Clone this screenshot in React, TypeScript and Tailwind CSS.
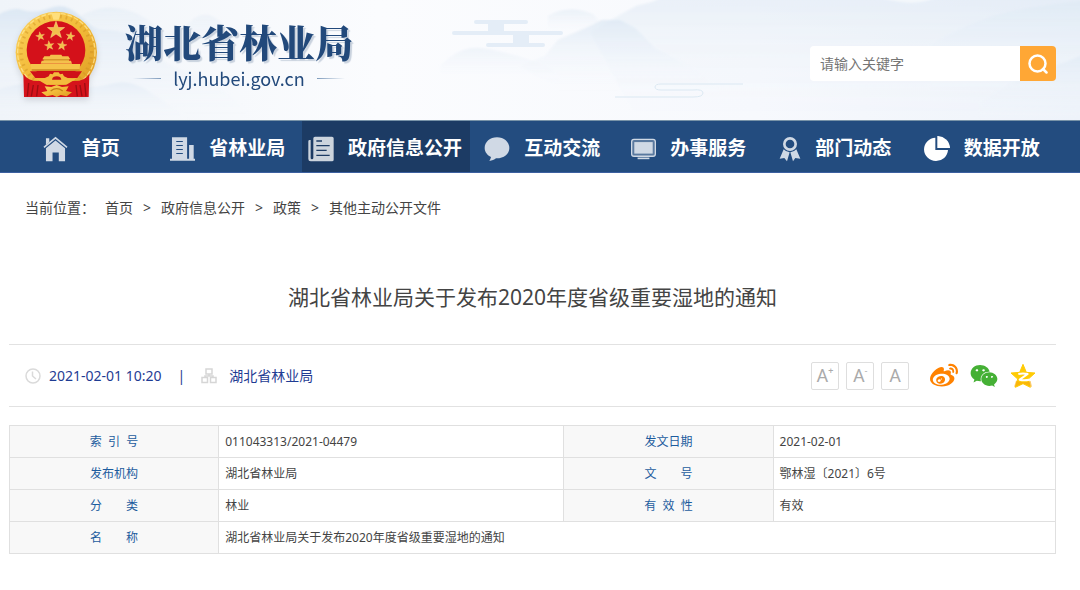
import { useState } from 'react';
import type { ReactNode } from 'react';
import { FaWeibo, FaWeixin } from 'react-icons/fa';

type NavItem = {
    label: string
    icon: ReactNode
    active?: boolean
}

const navItems: NavItem[] = [
    {
        label: '首页',
        icon: (
            <svg viewBox="0 0 76 78" className="h-[26px] w-[25px] shrink-0" fill="#d0d9e5">
                <path d="M9 6h10v12L9 27z" />
                <path d="M3 34 38 5l35 29" fill="none" stroke="#d0d9e5" strokeWidth="5" />
                <path d="M38 13 67 37v39H48V50H29v26H9V37z" />
            </svg>
        ),
    },
    {
        label: '省林业局',
        icon: (
            <svg viewBox="0 0 76 78" className="h-[26px] w-[25px] shrink-0" fill="#d0d9e5">
                <path fillRule="evenodd" d="M6 3h46v66h6V27h14v42h4v6H0v-6h6zM19 15v3h20v-3zm0 12v3h20v-3zm0 12v3h20v-3zm0 12v3h20v-3z" />
            </svg>
        ),
    },
    {
        label: '政府信息公开',
        active: true,
        icon: (
            <svg viewBox="0 0 78 78" className="h-[26px] w-[26px] shrink-0">
                <path d="M21 2h51q5 0 5 5v64q0 5-5 5H8q-7 0-7-7V16q0-4 4-4h3v54q0 4 4 4t4-4V7q0-5 5-5z" fill="#ccd4dd" />
                <path d="M25 15h17M25 29h40M25 43h31M25 58h40" stroke="#1c3b64" strokeWidth="4" />
            </svg>
        ),
    },
    {
        label: '互动交流',
        icon: (
            <svg viewBox="0 0 78 78" className="h-[26px] w-[26px] shrink-0" fill="#d0d9e5">
                <path d="M39 4C18 4 2 18 2 36c0 12 8 22 19 27-1 5-3 9-5 12 8-1 15-4 20-8 22 1 40-12 40-31C76 18 60 4 39 4z" />
            </svg>
        ),
    },
    {
        label: '办事服务',
        icon: (
            <svg viewBox="0 0 76 78" className="h-[26px] w-[25px] shrink-0" fill="#d0d9e5">
                <rect x="2" y="10" width="72" height="51" rx="7" fill="#5a799f" stroke="#d0d9e5" strokeWidth="4" />
                <rect x="10" y="18" width="56" height="35" />
                <path d="M20 65h36v5H20z" />
            </svg>
        ),
    },
    {
        label: '部门动态',
        icon: (
            <svg viewBox="0 0 64 78" className="h-[26px] w-[22px] shrink-0" fill="#d0d9e5">
                <circle cx="32" cy="24" r="17" fill="none" stroke="#d0d9e5" strokeWidth="8" />
                <path d="M13 40q7 8 18 9l-8 27-8-10-14 2z" />
                <path d="M51 40q-7 8-18 9l8 27 7-10 15 2z" />
            </svg>
        ),
    },
    {
        label: '数据开放',
        icon: (
            <svg viewBox="0 0 78 78" className="h-[26px] w-[26px] shrink-0" fill="#fff">
                <path d="M34 5v37h38A36 35 0 1 1 34 5z" />
                <path d="M40 0a37 37 0 0 1 38 36H40z" />
            </svg>
        ),
    },
]

const crumbs = ['首页', '政府信息公开', '政策', '其他主动公开文件']

const records = [
    ['索\u00a0\u00a0引\u00a0\u00a0号', '011043313/2021-04479', '发文日期', '2021-02-01'],
    ['发布机构', '湖北省林业局', '文\u3000\u3000号', '鄂林湿〔2021〕6号'],
    ['分\u3000\u3000类', '林业', '有\u00a0\u00a0效\u00a0\u00a0性', '有效'],
]

const STAR = 'M0-10 2.4-3.2 9.5-3.1 3.8 1.2 5.9 8.1 0 4-5.9 8.1-3.8 1.2-9.5-3.1-2.4-3.2z'

const Scenery = () => (
    <svg viewBox="0 0 1080 120" preserveAspectRatio="none" className="absolute inset-0 h-full w-full" aria-hidden="true">
        <defs>
            <linearGradient id="peak" x1="0" y1="0" x2="0" y2="1">
                <stop offset="0" stopColor="#dbe7f3" />
                <stop offset="1" stopColor="#f6f9fd" stopOpacity="0" />
            </linearGradient>
            <linearGradient id="sky" x1="0" y1="0" x2="1" y2="0">
                <stop offset="0" stopColor="#f0f4f9" />
                <stop offset="0.35" stopColor="#fbfcfe" />
                <stop offset="0.7" stopColor="#f7f9fd" />
                <stop offset="1" stopColor="#eef3fa" />
            </linearGradient>
            <filter id="mist" x="-5%" y="-20%" width="110%" height="140%">
                <feGaussianBlur stdDeviation="1" />
            </filter>
        </defs>
        <path fill="url(#sky)" d="M0 0h1080v120H0z" />
        <g filter="url(#mist)">
            <path fill="url(#peak)" d="M-10 20Q10 6 22 10T50 8t30 8 25 14 20 3 25 18 40 22 60 40H-10z" />
            <path fill="url(#peak)" opacity=".4" d="M60 30Q90 5 115 8t40 18 35-4 40 12 60 30H60z" />
            <path fill="url(#peak)" opacity=".5" d="M-10 92q40-14 70-8t50 0 40 8 40 28H-10z" />
            <path fill="url(#peak)" opacity=".35" d="M440 66q20-20 40-18t50 12 30 20H440z" />
            <path fill="url(#peak)" opacity=".5" d="M548 16q14-8 30-6t20 10-50 12z" />
            <path fill="url(#peak)" opacity=".55" d="M590 32L618 16 636 6 652 2 670-6H1090V125H640z" />
            <path fill="url(#peak)" opacity=".7" d="M520 66L545 56 558 40 590 26 602 20 620 20 635 28 655 48 690 66 720 90H560z" />
            <path fill="url(#peak)" opacity=".5" d="M930 45q30-18 60-28t100-17v90H930z" />
            <path fill="url(#peak)" opacity=".6" d="M980 105q30-25 60-34t50-20v75H980z" />
            <path fill="#fff" opacity=".5" d="M850-4h90q-20 10-45 5t-45-5z" />
        </g>
        <g stroke="#e4edf7" strokeWidth="4" strokeLinecap="round">
            <path d="M476 22h50M454 33h107M488 45h55" />
            <path d="M496 22v11M521 33v12" strokeWidth="16" strokeLinecap="butt" />
        </g>
        <path d="M615 97h78q10 0 10-4t-10-3h-32q-6 0-6-3t6-3h82" fill="none" stroke="#dbe8f2" strokeWidth="1" />
    </svg>
)

const Emblem = () => (
    <svg viewBox="18 15 252 270" className="h-[90px] w-[84px] shrink-0 drop-shadow-md" role="img" aria-label="国徽">
        <defs>
            <linearGradient id="gold" x1="0" y1="0" x2="1" y2="1">
                <stop offset="0" stopColor="#fbd25c" />
                <stop offset="0.5" stopColor="#f2ba38" />
                <stop offset="1" stopColor="#dc9a22" />
            </linearGradient>
        </defs>
        <ellipse cx="145" cy="142" rx="122" ry="122" fill="url(#gold)" />
        <ellipse cx="145" cy="140" rx="106" ry="106" fill="none" stroke="#cf9222" strokeWidth="10" strokeDasharray="5 12" opacity=".5" />
        <ellipse cx="145" cy="141" rx="116" ry="116" fill="none" stroke="#ffe590" strokeWidth="4" strokeDasharray="14 6" opacity=".8" />
        <path d="M130 24h28l-6 20h-16z" fill="#ffdf7c" />
        <ellipse cx="144" cy="135" rx="88" ry="87" fill="#d4111a" />
        <g fill="#f2c04c" stroke="#fbe08a" strokeWidth=".6">
            <path d={STAR} transform="translate(144 76) scale(2.700)" />
            <path d={STAR} transform="translate(97 94) rotate(-10) scale(1.400)" />
            <path d={STAR} transform="translate(187 94) rotate(10) scale(1.400)" />
            <path d={STAR} transform="translate(124 122) rotate(-8) scale(1.500)" />
            <path d={STAR} transform="translate(162 122) rotate(8) scale(1.500)" />
        </g>
        <path d="M128 149h32l3 5h18l6 9h-4v4h6l3 9H98l3-9h6v-4h-4l6-9h16z" fill="#f4c04c" />
        <path d="M106 163h78v3h-78z" fill="#c8841c" />
        <path d="M67 177h150l-3 20H71z" fill="#f5c34a" />
        <path d="M71 193h144v4H71z" fill="#cd8b20" />
        <path d="M66 199h156l-14 20H82z" fill="#cf1119" />
        <path d="M84 220q24 4 38-6l4-8 8 2 4-6h14l4 6 8-2 4 8q14 10 38 6l-26 18H108z" fill="#f3bb3c" />
        <path d="M132 224q2-10 14-10t14 10z" fill="#c9141a" />
        <path d="M46 206q14 24 50 22l20 12h58l20-12q36 2 50-22l-2 70H48z" fill="#d5131b" />
        <path d="M62 234l-4 40M76 240l-6 34M230 234l4 40M216 240l6 34M90 240l-4 34M204 240l4 34" stroke="#9c0d12" strokeWidth="4" />
        <path d="M100 262l18-4-8-14 20 2 16-6 16 6 20-2-8 14 18 4-16 12-18-4-12 6-12-6-18 4z" fill="url(#gold)" />
        <path d="M128 258q18-14 36 0" fill="none" stroke="#c07d16" strokeWidth="4" />
    </svg>
)

const QzoneIcon = () => (
    <svg viewBox="0 0 78 78" className="h-[26px] w-[26px]" aria-hidden="true">
        <path d="M39 4l10 24 26 2-20 18 6 25-22-11-23 11 7-25L3 30l26-2z" fill="#ffcb05" stroke="#ffcb05" strokeWidth="3" strokeLinejoin="round" />
        <path d="M12 72l6-19q20 9 44 1l4 18-27-11z" fill="#f7a90a" opacity=".6" />
        <path d="M25 33q14-3 28 0L29 50q13 3 29 0" fill="none" stroke="#fff" strokeWidth="6" strokeLinejoin="round" />
    </svg>
)

const App = () => {
    const [keyword, setKeyword] = useState<string>('')

    const sizeButton = 'flex h-7 w-7 items-center justify-center rounded-xs border border-[#dedede] font-[Roboto,sans-serif] text-lg leading-6 text-[#aaaaaa] cursor-pointer'

    return (
        <div className="bg-white pb-9 font-['Noto_Sans','Noto_Sans_CJK_SC',sans-serif] text-[#444444]">
            <header className="relative flex h-30 items-start justify-between pl-3.5 pr-6 pt-2.5">
                <Scenery />
                <a href="#home" className="relative flex items-start gap-[27px]">
                    <Emblem />
                    <div className="flex flex-col items-center pt-1 text-[#22497b]">
                        <h1 className="text-[38px] leading-[54px] font-black font-['Noto_Serif_CJK_SC','Noto_Sans_CJK_SC',serif] text-shadow-[2px_2px_1px_#c9d2de]">湖北省林业局</h1>
                        <div className="flex items-center gap-3">
                            <span className="h-px w-7 bg-linear-to-r from-transparent to-[#7d9abb]" />
                            <span className="font-['Noto_Sans_CJK_SC',sans-serif] text-lg leading-5">lyj.hubei.gov.cn</span>
                            <span className="h-px w-7 bg-linear-to-l from-transparent to-[#7d9abb]" />
                        </div>
                    </div>
                </a>
                <form className="relative mt-9 flex h-[35px]" onSubmit={(e) => e.preventDefault()}>
                    <input
                        type="text"
                        aria-label="请输入关键字"
                        placeholder="请输入关键字"
                        value={keyword}
                        onChange={(e) => setKeyword(e.target.value)}
                        className="w-[210px] rounded-l-sm bg-white px-2.5 text-sm outline-none placeholder:text-[#757575]"
                    />
                    <button type="submit" aria-label="搜索" className="flex w-9 items-center justify-center rounded-r-sm bg-[#ffa735] cursor-pointer">
                        <svg viewBox="0 0 20 20" className="h-5 w-5" fill="none" stroke="#fff" strokeWidth="2.500" strokeLinecap="round">
                            <circle cx="9.500" cy="9.500" r="8" />
                            <path d="M15 15l3.500 3.500" />
                        </svg>
                    </button>
                </form>
            </header>

            <nav className="border-t border-b border-t-[#7893a8] border-b-[#3c60a0] bg-[#234c7f] pl-[9px] pr-6">
                <ul className="flex h-[51px]">
                    {navItems.map((item) => (
                        <li key={item.label} className={item.active ? 'shrink-0 bg-[#1c3b64]' : 'flex-1'}>
                            <a href="#nav" className="flex h-full items-center justify-center gap-3.5 pt-1 pr-2 pl-1.5 text-[19px] font-bold whitespace-nowrap text-white">
                                {item.icon}
                                {item.label}
                            </a>
                        </li>
                    ))}
                </ul>
            </nav>

            <main className="pl-[9px] pr-6">
                <nav className="flex px-4 pt-[23px] text-sm leading-6" aria-label="当前位置">
                    <span className="mr-2.5">当前位置：</span>
                    {crumbs.map((crumb, i) => (
                        <span key={crumb}>
                            {i > 0 && <span className="mx-2.5">&gt;</span>}
                            <a href="#crumb">{crumb}</a>
                        </span>
                    ))}
                </nav>

                <h2 className="mt-[61px] text-center text-[21px] leading-8">湖北省林业局关于发布2020年度省级重要湿地的通知</h2>

                <div className="mt-[31px] flex h-[63px] items-center justify-between border-y border-[#e2e2e2] px-4 text-sm text-[#1f3c93]">
                    <div className="flex items-center">
                        <svg viewBox="0 0 16 16" className="mr-2 h-4 w-4" fill="none" stroke="#dadada" strokeWidth="1.500">
                            <circle cx="8" cy="8" r="7" />
                            <path d="M7.500 3.500V8l3.500 3" />
                        </svg>
                        <span>2021-02-01 10:20</span>
                        <span className="mx-4">|</span>
                        <svg viewBox="0 0 16 16" className="mr-3 h-4 w-4" fill="none" stroke="#d6d6d6" strokeWidth="1.500">
                            <rect x="5" y="1" width="6" height="5" />
                            <rect x="1" y="9.500" width="5.500" height="5" />
                            <rect x="9.500" y="9.500" width="5.500" height="5" />
                            <path d="M8 6v2.500M4 9.500V8h8v1.500" />
                        </svg>
                        <span>湖北省林业局</span>
                    </div>
                    <div className="flex items-center gap-[7px]">
                        <button type="button" className={sizeButton} aria-label="放大字号">A<span className="self-start text-[9px] leading-4">+</span></button>
                        <button type="button" className={sizeButton} aria-label="缩小字号">A<span className="self-start text-[9px] leading-4">-</span></button>
                        <button type="button" className={sizeButton} aria-label="默认字号">A</button>
                        <div className="ml-3.5 flex items-center gap-3 pr-1">
                            <a href="#weibo" aria-label="微博"><FaWeibo size={28} className="text-[#ff8200]" /></a>
                            <a href="#wechat" aria-label="微信"><FaWeixin size={28} className="text-[#45b035]" /></a>
                            <a href="#qzone" aria-label="QQ空间"><QzoneIcon /></a>
                        </div>
                    </div>
                </div>

                <table className="mt-[18px] w-full table-fixed border-collapse text-xs">
                    <colgroup>
                        <col className="w-[20%]" />
                        <col className="w-[33%]" />
                        <col className="w-[20%]" />
                        <col className="w-[27%]" />
                    </colgroup>
                    <tbody>
                        {records.map((row) => (
                            <tr key={row[0]} className="h-8">
                                {row.map((cell, i) => i % 2 === 0
                                    ? <th key={cell} scope="row" className="border border-[#e0e0e0] bg-[#f8f8f8] font-normal text-[#1d5c9e]">{cell}</th>
                                    : <td key={cell} className="border border-[#e0e0e0] px-1.5">{cell}</td>
                                )}
                            </tr>
                        ))}
                        <tr className="h-8">
                            <th scope="row" className="border border-[#e0e0e0] bg-[#f8f8f8] font-normal text-[#1d5c9e]">名{'\u3000\u3000'}称</th>
                            <td colSpan={3} className="border border-[#e0e0e0] px-1.5">湖北省林业局关于发布2020年度省级重要湿地的通知</td>
                        </tr>
                    </tbody>
                </table>
            </main>
        </div>
    )
}

export default App
